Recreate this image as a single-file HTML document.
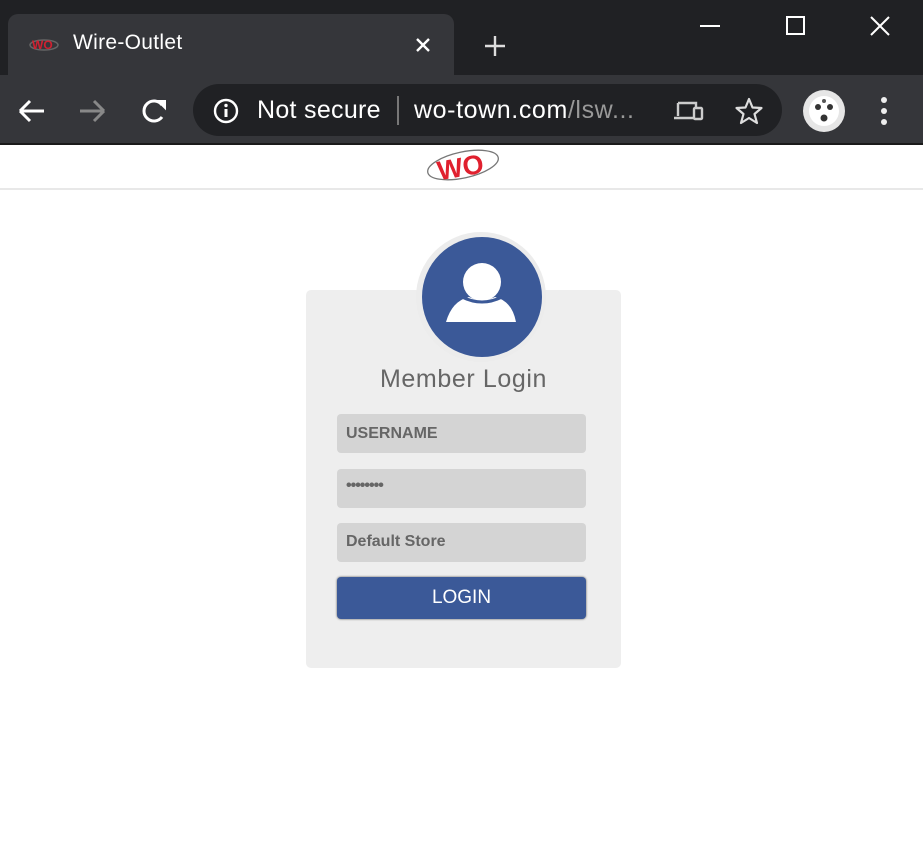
<!DOCTYPE html>
<html><head><meta charset="utf-8"><style>
*{margin:0;padding:0;box-sizing:border-box}
body{width:923px;height:848px;background:#fff;font-family:"Liberation Sans",sans-serif;position:relative;overflow:hidden}
.abs{position:absolute}
</style></head><body>
<div class="abs" style="left:0;top:0;width:923px;height:75px;background:#202124"></div>
<div class="abs" style="left:8px;top:14px;width:446px;height:66px;background:#35363a;border-radius:10px 10px 0 0"></div>
<div class="abs" style="left:0;top:75px;width:923px;height:69px;background:#35363a"></div>
<div class="abs" style="left:0;top:143px;width:923px;height:2px;background:#1a1a1a"></div>
<svg class="abs" style="left:28px;top:36px" width="32" height="16"><ellipse cx="16" cy="9" rx="14" ry="5" fill="none" stroke="#666" stroke-width="1.5"/><text x="4" y="13" font-family="Liberation Sans" font-weight="bold" font-size="12" fill="#d02030">WO</text></svg>
<div class="abs" style="left:73px;top:31px;color:#fff;font-size:21px;letter-spacing:0.3px">Wire-Outlet</div>
<svg class="abs" style="left:414px;top:36px" width="18" height="18"><path d="M3 3L15 15M15 3L3 15" stroke="#fff" stroke-width="2.4"/></svg>
<svg class="abs" style="left:483px;top:34px" width="24" height="24"><path d="M12 2V22M2 12H22" stroke="#ddd" stroke-width="2.4"/></svg>
<svg class="abs" style="left:698px;top:14px" width="200" height="24"><path d="M2 12H22" stroke="#fff" stroke-width="2"/><rect x="89" y="3" width="17" height="17" fill="none" stroke="#fff" stroke-width="2"/><path d="M173 3L191 21M191 3L173 21" stroke="#fff" stroke-width="2"/></svg>
<svg class="abs" style="left:16px;top:95px" width="160" height="32"><path d="M4 16H28M4 16L14 6M4 16L14 26" stroke="#fff" stroke-width="3" fill="none"/><path d="M64 16H88M88 16L78 6M88 16L78 26" stroke="#888" stroke-width="3" fill="none"/><path d="M146 10A10 10 0 1 0 146 22" stroke="#fff" stroke-width="3" fill="none"/><path d="M142 6L149 6L149 13Z" fill="#fff" stroke="#fff" stroke-width="2"/></svg>
<div class="abs" style="left:193px;top:84px;width:589px;height:52px;background:#202124;border-radius:26px"></div>
<svg class="abs" style="left:212px;top:97px" width="28" height="28"><circle cx="14" cy="14" r="11" fill="none" stroke="#fff" stroke-width="2.4"/><rect x="12.5" y="12" width="3" height="8" fill="#fff"/><circle cx="14" cy="8.5" r="1.7" fill="#fff"/></svg>
<div class="abs" style="left:257px;top:96px;color:#fff;font-size:25px;letter-spacing:0.3px">Not secure</div>
<div class="abs" style="left:397px;top:96px;width:2px;height:29px;background:#777"></div>
<div class="abs" style="left:414px;top:96px;color:#fff;font-size:25px;letter-spacing:0.6px">wo-town.com<span style="color:#999">/lsw...</span></div>
<svg class="abs" style="left:672px;top:97px" width="34" height="28"><path d="M6 6H24V10M2 21H22M6 6V19" stroke="#ccc" stroke-width="2.4" fill="none"/><rect x="22" y="11" width="8" height="11" rx="1" fill="none" stroke="#ccc" stroke-width="2.4"/></svg>
<svg class="abs" style="left:734px;top:96px" width="30" height="30"><path d="M15 3L18.5 11.5L27.5 12L20.5 18L23 27L15 22L7 27L9.5 18L2.5 12L11.5 11.5Z" fill="none" stroke="#ddd" stroke-width="2.2" stroke-linejoin="round"/></svg>
<svg class="abs" style="left:802px;top:89px" width="44" height="44"><circle cx="22" cy="22" r="21" fill="#e6e6e6"/><circle cx="22" cy="22" r="15" fill="#fff"/><circle cx="16" cy="18" r="3" fill="#333"/><circle cx="28" cy="18" r="3" fill="#333"/><circle cx="22" cy="29" r="3.5" fill="#333"/><circle cx="22" cy="12" r="2" fill="#555"/></svg>
<svg class="abs" style="left:876px;top:96px" width="16" height="32"><circle cx="8" cy="4" r="3" fill="#eee"/><circle cx="8" cy="15" r="3" fill="#eee"/><circle cx="8" cy="26" r="3" fill="#eee"/></svg>

<div class="abs" style="left:0;top:188px;width:923px;height:2px;background:#e8e8e8"></div>
<svg class="abs" style="left:425px;top:146px" width="78" height="36"><ellipse cx="38" cy="19" rx="36" ry="13" transform="rotate(-12 38 19)" fill="none" stroke="#777" stroke-width="1.3"/><text x="12" y="30" font-family="Liberation Sans" font-weight="bold" font-size="27" fill="#e0202e" transform="rotate(-10 38 20)">WO</text></svg>

<div class="abs" style="left:306px;top:290px;width:315px;height:378px;background:#eeeeee;border-radius:5px"></div>
<div class="abs" style="left:416px;top:232px;width:130px;height:130px;border-radius:50%;background:#ececec"></div>
<div class="abs" style="left:422px;top:237px;width:120px;height:120px;border-radius:50%;background:#3b5998"></div>
<svg class="abs" style="left:442px;top:257px" width="80" height="70"><circle cx="40" cy="25" r="19" fill="#fff"/><path d="M4 65Q10 44 27 40Q40 46 53 40Q70 44 74 65Z" fill="#fff"/><path d="M20 40Q40 50 60 40" stroke="#3b5998" stroke-width="3" fill="none"/></svg>
<div class="abs" style="left:306px;top:365px;width:315px;text-align:center;font-size:25px;color:#666;letter-spacing:0.6px">Member Login</div>
<div class="abs" style="left:337px;top:414px;width:249px;height:39px;background:#d4d4d4;border-radius:4px;padding:11px 9px;font-size:16px;color:#666;font-weight:bold">USERNAME</div>
<div class="abs" style="left:337px;top:469px;width:249px;height:39px;background:#d4d4d4;border-radius:4px;padding:8px 9px;font-size:16px;color:#666;letter-spacing:-1px;font-weight:bold">••••••••</div>
<div class="abs" style="left:337px;top:523px;width:249px;height:39px;background:#d4d4d4;border-radius:4px;padding:10px 9px;font-size:16px;color:#666;font-weight:bold">Default Store</div>
<div class="abs" style="left:337px;top:577px;width:249px;height:42px;background:#3b5998;border-radius:4px;box-shadow:0 0 2px #555;text-align:center;padding-top:10px;font-size:19px;color:#fff">LOGIN</div>
</body></html>
